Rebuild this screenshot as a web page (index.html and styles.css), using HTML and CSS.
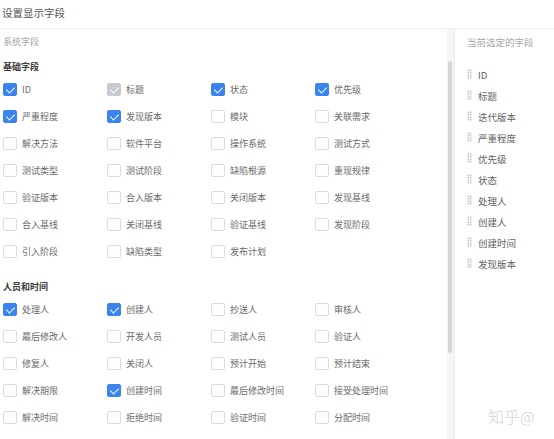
FILE: index.html
```html
<!DOCTYPE html>
<html lang="zh-CN">
<head>
<meta charset="utf-8">
<link rel="stylesheet" href="styles.css">
</head>
<body>
<div class="page">
  <div class="header">设置显示字段</div>
  <div class="main">
    <div class="left">
      <div class="pane-title">系统字段</div>
      <div class="group-title">基础字段</div>
      <div class="grid">
        <label class="item"><span class="box on"></span>ID</label>
        <label class="item"><span class="box dis"></span>标题</label>
        <label class="item"><span class="box on"></span>状态</label>
        <label class="item"><span class="box on"></span>优先级</label>
        <label class="item"><span class="box on"></span>严重程度</label>
        <label class="item"><span class="box on"></span>发现版本</label>
        <label class="item"><span class="box"></span>模块</label>
        <label class="item"><span class="box"></span>关联需求</label>
        <label class="item"><span class="box"></span>解决方法</label>
        <label class="item"><span class="box"></span>软件平台</label>
        <label class="item"><span class="box"></span>操作系统</label>
        <label class="item"><span class="box"></span>测试方式</label>
        <label class="item"><span class="box"></span>测试类型</label>
        <label class="item"><span class="box"></span>测试阶段</label>
        <label class="item"><span class="box"></span>缺陷根源</label>
        <label class="item"><span class="box"></span>重现规律</label>
        <label class="item"><span class="box"></span>验证版本</label>
        <label class="item"><span class="box"></span>合入版本</label>
        <label class="item"><span class="box"></span>关闭版本</label>
        <label class="item"><span class="box"></span>发现基线</label>
        <label class="item"><span class="box"></span>合入基线</label>
        <label class="item"><span class="box"></span>关闭基线</label>
        <label class="item"><span class="box"></span>验证基线</label>
        <label class="item"><span class="box"></span>发现阶段</label>
        <label class="item"><span class="box"></span>引入阶段</label>
        <label class="item"><span class="box"></span>缺陷类型</label>
        <label class="item"><span class="box"></span>发布计划</label>
      </div>
      <div class="group-title second">人员和时间</div>
      <div class="grid">
        <label class="item"><span class="box on"></span>处理人</label>
        <label class="item"><span class="box on"></span>创建人</label>
        <label class="item"><span class="box"></span>抄送人</label>
        <label class="item"><span class="box"></span>审核人</label>
        <label class="item"><span class="box"></span>最后修改人</label>
        <label class="item"><span class="box"></span>开发人员</label>
        <label class="item"><span class="box"></span>测试人员</label>
        <label class="item"><span class="box"></span>验证人</label>
        <label class="item"><span class="box"></span>修复人</label>
        <label class="item"><span class="box"></span>关闭人</label>
        <label class="item"><span class="box"></span>预计开始</label>
        <label class="item"><span class="box"></span>预计结束</label>
        <label class="item"><span class="box"></span>解决期限</label>
        <label class="item"><span class="box on"></span>创建时间</label>
        <label class="item"><span class="box"></span>最后修改时间</label>
        <label class="item"><span class="box"></span>接受处理时间</label>
        <label class="item"><span class="box"></span>解决时间</label>
        <label class="item"><span class="box"></span>拒绝时间</label>
        <label class="item"><span class="box"></span>验证时间</label>
        <label class="item"><span class="box"></span>分配时间</label>
      </div>
    </div>
    <div class="scroll"><div class="thumb"></div></div>
    <div class="right">
      <div class="pane-title">当前选定的字段</div>
      <ul class="selected">
        <li><span class="handle"></span>ID</li>
        <li><span class="handle"></span>标题</li>
        <li><span class="handle"></span>迭代版本</li>
        <li><span class="handle"></span>严重程度</li>
        <li><span class="handle"></span>优先级</li>
        <li><span class="handle"></span>状态</li>
        <li><span class="handle"></span>处理人</li>
        <li><span class="handle"></span>创建人</li>
        <li><span class="handle"></span>创建时间</li>
        <li><span class="handle"></span>发现版本</li>
      </ul>
      <div class="watermark">知乎@</div>
    </div>
  </div>
</div>
</body>
</html>
```
FILE: styles.css
```css
* { box-sizing: border-box; }
html, body {
  margin: 0;
  padding: 0;
  background: #fff;
  overflow: hidden;
}
body {
  font-family: "Noto Sans CJK SC", "Noto Sans", sans-serif;
  color: #555;
  width: 554px;
  height: 439px;
}
.page {
  width: 554px;
  height: 439px;
  display: flex;
  flex-direction: column;
}
.header {
  height: 29px;
  line-height: 26px;
  padding-left: 2px;
  font-size: 10.5px;
  color: #555;
  border-bottom: 1px solid #eeeeee;
  flex: none;
}
.main {
  flex: 1;
  display: flex;
  min-height: 0;
}
.left {
  width: 447px;
  padding-left: 3px;
  overflow: hidden;
}
.pane-title {
  height: 26px;
  line-height: 26px;
  font-size: 9px;
  color: #a5a5a5;
}
.group-title {
  margin-top: 4px;
  height: 16px;
  line-height: 16px;
  font-size: 9px;
  font-weight: bold;
  color: #3a3a3a;
}
.group-title.second {
  margin-top: 14px;
}
.grid {
  display: grid;
  grid-template-columns: repeat(4, 104px);
  grid-auto-rows: 27px;
  margin-top: 1px;
}
.item {
  display: flex;
  align-items: center;
  gap: 5px;
  font-size: 9px;
  color: #6a6a6a;
  white-space: nowrap;
}
.box {
  position: relative;
  width: 14px;
  height: 13px;
  border: 1px solid #dcdcdc;
  border-radius: 2px;
  background: #fff;
  flex: none;
}
.box.on {
  background: #3a84f0;
  border-color: #3a84f0;
}
.box.dis {
  background: #c6cad1;
  border-color: #c6cad1;
}
.box.on::after,
.box.dis::after {
  content: "";
  position: absolute;
  left: 4px;
  top: 1px;
  width: 4px;
  height: 7px;
  border-right: 1.6px solid #fff;
  border-bottom: 1.6px solid #fff;
  transform: rotate(45deg);
}
.scroll {
  width: 7px;
  background: #f5f5f5;
  padding-top: 32px;
  flex: none;
}
.thumb {
  width: 4px;
  margin-left: 1px;
  height: 292px;
  background: #d6d6d6;
  border-radius: 2px;
}
.right {
  flex: 1;
  border-left: 1px solid #eeeeee;
  padding-left: 12px;
  position: relative;
}
.right .pane-title {
  font-size: 9.5px;
  color: #a5a5a5;
}
.selected {
  list-style: none;
  margin: 9px 0 0;
  padding: 0;
}
.selected li {
  height: 21px;
  display: flex;
  align-items: center;
  font-size: 9.5px;
  color: #5f5f5f;
}
.handle {
  width: 5px;
  height: 10px;
  margin-right: 6px;
  margin-top: -2px;
  background-image: radial-gradient(circle, #c2c2c2 0.8px, transparent 0.9px);
  background-size: 2.5px 2.5px;
  flex: none;
}
.watermark {
  position: absolute;
  left: 33px;
  top: 375px;
  font-size: 16px;
  color: #d2d2d2;
  font-weight: 300;
}
```
